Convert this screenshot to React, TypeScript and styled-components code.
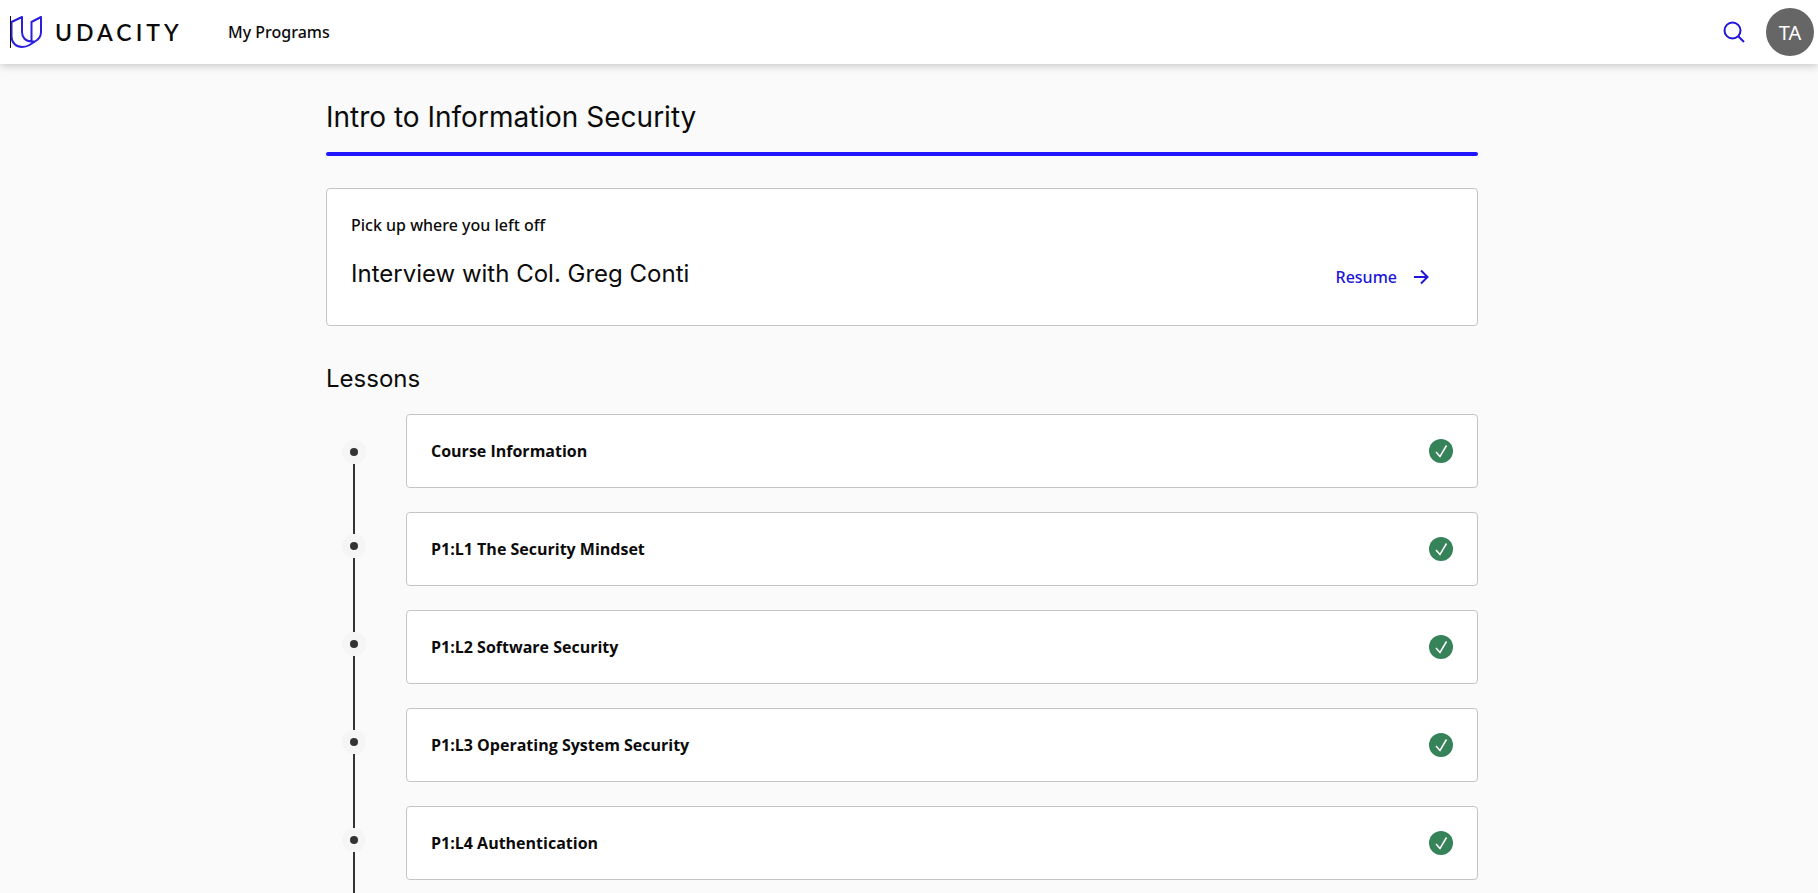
import React from "react";
import styled, { createGlobalStyle } from "styled-components";

const GlobalStyle = createGlobalStyle`
  *, *::before, *::after { box-sizing: border-box; }
  body {
    margin: 0;
    background: #fafafa;
    color: #0b0b0b;
    font-family: "Noto Sans", "Open Sans", sans-serif;
    font-size: 16px;
    line-height: 24px;
  }
  h1, h2, h3, p, ol { margin: 0; padding: 0; }
  a { color: inherit; text-decoration: none; }
`;

const Page = styled.div`
  height: 100vh;
  overflow-y: auto;
  scrollbar-width: none;
`;

const Header = styled.header`
  position: relative;
  display: flex;
  align-items: center;
  height: 64px;
  padding: 0 4px 0 10px;
  background: #fff;
  box-shadow: 0 2px 8px rgba(0, 0, 0, 0.2);
`;

const Brand = styled.a`
  display: flex;
  align-items: center;
  gap: 12px;
  width: 218px;
`;

const Wordmark = styled.span`
  color: #0b0b0b;
  font-family: Lato, sans-serif;
  font-size: 23px;
  font-weight: 600;
  letter-spacing: 4px;
`;

const NavLink = styled.a`
  font-weight: 500;
`;

const HeaderTools = styled.div`
  display: flex;
  align-items: center;
  gap: 16px;
  margin-left: auto;
`;

const IconButton = styled.button`
  display: grid;
  place-items: center;
  width: 32px;
  height: 32px;
  padding: 0;
  border: 0;
  background: none;
  color: #2015d8;
`;

const Avatar = styled.button`
  width: 48px;
  height: 48px;
  padding: 0;
  border: 0;
  border-radius: 50%;
  background: #666;
  color: #fff;
  font-family: inherit;
  font-size: 20px;
`;

const Main = styled.main`
  padding: 33px 14px 0 0;
`;

const Column = styled.div`
  max-width: 1152px;
  margin: 0 auto;
`;

const Title = styled.h1`
  padding-bottom: 15px;
  font-family: Inter, sans-serif;
  font-size: 28px;
  font-weight: 400;
  line-height: 40px;
`;

const Rule = styled.div`
  height: 4px;
  border-radius: 2px;
  background: #2015ff;
`;

const Subtitle = styled.h2`
  font-family: Inter, sans-serif;
  font-size: 24px;
  font-weight: 400;
  line-height: 32px;
`;

const Card = styled.div`
  border: 1px solid #c4c4c4;
  border-radius: 4px;
  background: #fff;
`;

const ResumeCard = styled(Card)`
  display: flex;
  align-items: flex-end;
  justify-content: space-between;
  margin: 32px 0 37px;
  padding: 24px 48px 35px 24px;
`;

const ResumeText = styled.div`
  display: grid;
  gap: 21px;
`;

const Label = styled.p`
  font-weight: 500;
`;

const ResumeLink = styled.a`
  display: flex;
  align-items: center;
  gap: 16px;
  color: #2015d8;
  font-weight: 500;
  line-height: 26px;
`;

const Outline = styled.div`
  display: grid;
  grid-template-columns: 56px 1fr;
  align-items: start;
  column-gap: 24px;
  margin-top: 19px;
`;

const Timeline = styled.div`
  display: flex;
  flex-direction: column;
  align-items: center;
  padding-top: 26px;
`;

const Stop = styled.span`
  display: grid;
  place-items: center;
  flex: none;
  width: 24px;
  height: 24px;
  border-radius: 50%;
  background: #f5f5f5;

  &::after {
    content: "";
    width: 8px;
    height: 8px;
    border-radius: 50%;
    background: #333;
  }
`;

const Segment = styled.span<{ $first: boolean }>`
  flex: none;
  width: 2px;
  height: ${(p) => (p.$first ? 70 : 74)}px;
  background: #333;
`;

const LessonList = styled.ol`
  display: grid;
  gap: 24px;
  list-style: none;
`;

const LessonCard = styled(Card)`
  display: flex;
  align-items: center;
  justify-content: space-between;
  padding: 24px;
`;

const LessonLink = styled.a`
  font-family: "Open Sans", sans-serif;
  font-weight: 700;
`;

const Logo = () => (
  <svg width="33" height="32" viewBox="0 0 33 32" fill="none" aria-hidden="true">
    <g stroke="#2a1fe0" strokeWidth="2" strokeLinejoin="round">
      <path d="M1.5 6 12 1V16C12 21.500 15.500 25.500 21.500 25.500V6L31 1V16C31 20.500 28.500 23.500 25 25.500L19.500 29C17 30.500 14.500 31 12 31 6 31 1.500 26.500 1.500 20.500Z" />
      <path d="M21.500 25.500H24.500" />
    </g>
    <path d="M.5 0V32" stroke="#111" />
  </svg>
);

const SearchIcon = () => (
  <svg width="22" height="22" viewBox="0 0 22 22" fill="none" stroke="currentColor" strokeWidth="2" aria-hidden="true">
    <circle cx="9.500" cy="9.500" r="8" />
    <path d="m15 15 6 6" />
  </svg>
);

const ArrowIcon = () => (
  <svg width="16" height="16" viewBox="0 0 16 16" fill="none" stroke="currentColor" strokeWidth="2" aria-hidden="true">
    <path d="M1 8h13M8 1.500 14.500 8 8 14.500" />
  </svg>
);

const DoneIcon = () => (
  <svg width="24" height="24" viewBox="0 0 24 24" fill="none" role="img" aria-label="Completed">
    <circle cx="12" cy="12" r="12" fill="#368259" />
    <path d="m7 13 4 4.500L17.500 6.500" stroke="#fff" strokeWidth="1.500" />
  </svg>
);

const lessons = [
  "Course Information",
  "P1:L1 The Security Mindset",
  "P1:L2 Software Security",
  "P1:L3 Operating System Security",
  "P1:L4 Authentication",
];

export default function App() {
  return (
    <Page>
      <GlobalStyle />
      <Header>
        <Brand href="#">
          <Logo />
          <Wordmark>UDACITY</Wordmark>
        </Brand>
        <nav>
          <NavLink href="#programs">My Programs</NavLink>
        </nav>
        <HeaderTools>
          <IconButton type="button" aria-label="Search">
            <SearchIcon />
          </IconButton>
          <Avatar type="button">TA</Avatar>
        </HeaderTools>
      </Header>
      <Main>
        <Column>
          <Title>Intro to Information Security</Title>
          <Rule />
          <ResumeCard>
            <ResumeText>
              <Label>Pick up where you left off</Label>
              <Subtitle>Interview with Col. Greg Conti</Subtitle>
            </ResumeText>
            <ResumeLink href="#resume">
              Resume
              <ArrowIcon />
            </ResumeLink>
          </ResumeCard>
          <Subtitle>Lessons</Subtitle>
          <Outline>
            <Timeline>
              {lessons.map((name, i) => (
                <React.Fragment key={name}>
                  <Stop />
                  <Segment $first={i === 0} />
                </React.Fragment>
              ))}
            </Timeline>
            <LessonList>
              {lessons.map((name, i) => (
                <li key={name}>
                  <LessonCard>
                    <LessonLink href={`#lesson-${i + 1}`}>{name}</LessonLink>
                    <DoneIcon />
                  </LessonCard>
                </li>
              ))}
            </LessonList>
          </Outline>
        </Column>
      </Main>
    </Page>
  );
}
